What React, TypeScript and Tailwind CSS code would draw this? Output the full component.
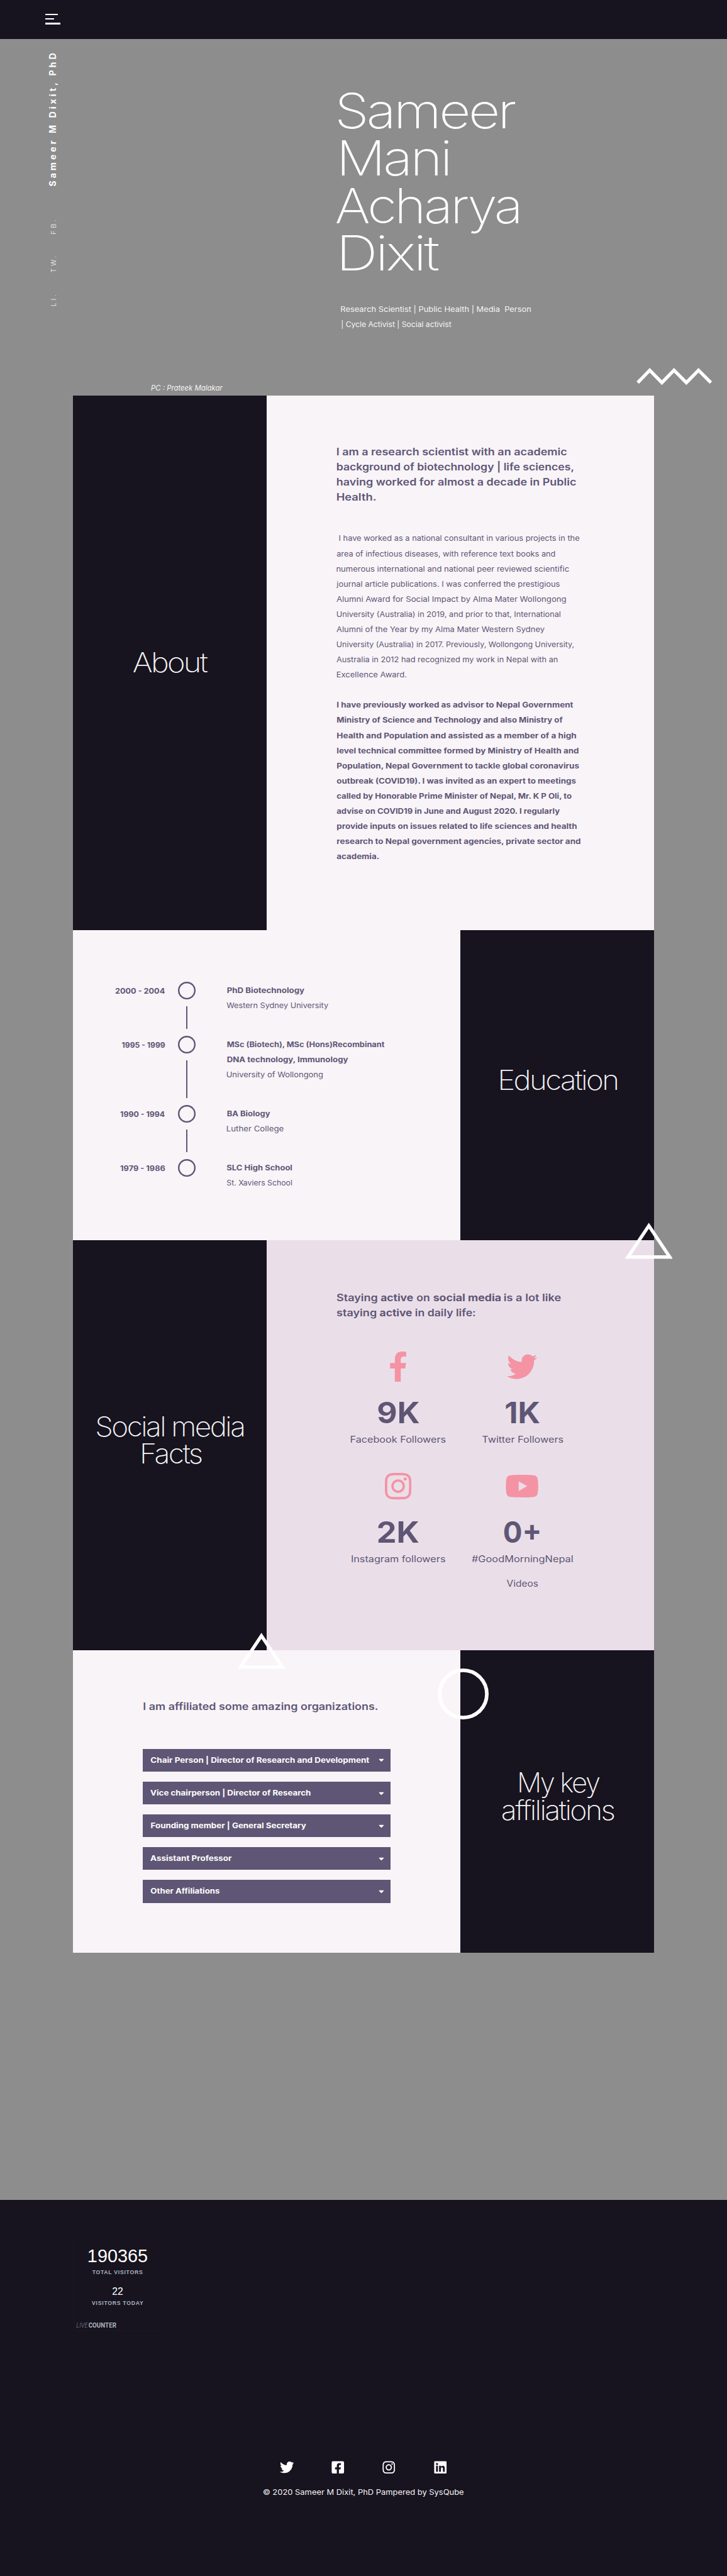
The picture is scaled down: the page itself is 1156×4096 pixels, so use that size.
import { useLayoutEffect, useRef, useState } from "react";
import type { ReactNode } from "react";
import {
  FaCaretDown,
  FaFacebookF,
  FaFacebookSquare,
  FaInstagram,
  FaLinkedin,
  FaTwitter,
  FaYoutube,
} from "react-icons/fa";

/** One run of text whose glyphs are stretched to span [from, to] inside its row. */
function Ink({ from, to, className = "", children }: { from: number; to: number; className?: string; children: string }) {
  const ref = useRef<HTMLSpanElement>(null);
  const [transform, setTransform] = useState("none");
  useLayoutEffect(() => {
    const ctx = document.createElement("canvas").getContext("2d");
    if (!ref.current || !ctx) return;
    const cs = getComputedStyle(ref.current);
    ctx.font = `${cs.fontStyle} ${cs.fontWeight} ${cs.fontSize} ${cs.fontFamily}`;
    ctx.letterSpacing = cs.letterSpacing === "normal" ? "0px" : cs.letterSpacing;
    const m = ctx.measureText(children);
    const left = -m.actualBoundingBoxLeft;
    const right = m.actualBoundingBoxRight;
    const scale = (to - from) / (right - left);
    setTransform(`translateX(${from - left * scale}px) scaleX(${scale})`);
  }, [from, to, children]);
  return (
    <span
      ref={ref}
      className={`col-start-1 row-start-1 justify-self-start origin-left whitespace-pre ${className}`}
      style={{ transform }}
    >
      {children}
    </span>
  );
}

function Row({ className = "", children }: { className?: string; children: ReactNode }) {
  return <div className={`grid grid-cols-1 items-baseline ${className}`}>{children}</div>;
}

type Span = [string, number, number];

function Lines({ items, className = "" }: { items: Span[]; className?: string }) {
  return (
    <div className={className}>
      {items.map(([text, from, to]) => (
        <Row key={text}>
          <Ink from={from} to={to}>{text}</Ink>
        </Row>
      ))}
    </div>
  );
}

function TitlePanel({ items, className = "pb-5" }: { items: Span[]; className?: string }) {
  return (
    <div className={`flex w-1/3 flex-col justify-center bg-[#17131f] ${className}`}>
      <Lines items={items} className="text-[54px] leading-[54px] font-extralight tracking-[-3px] text-[#f5f5f5]" />
    </div>
  );
}

const aboutLead: Span[] = [
  ["I am a research scientist with an academic", 0.8, 456.3],
  ["background of biotechnology | life sciences,", 0.8, 469.4],
  ["having worked for almost a decade in Public", 0.8, 474.6],
  ["Health.", 0.8, 77.7],
];

const aboutText: Span[] = [
  ["I have worked as a national consultant in various projects in the", 5.5, 481.4],
  ["area of infectious diseases, with reference text books and", 0.2, 433.3],
  ["numerous international and national peer reviewed scientific", 0.4, 461],
  ["journal article publications. I was conferred the prestigious", -0.7, 442.2],
  ["Alumni Award for Social Impact by Alma Mater Wollongong", 0, 454.8],
  ["University (Australia) in 2019, and prior to that, International", 0.8, 444.3],
  ["Alumni of the Year by my Alma Mater Western Sydney", 0, 412.4],
  ["University (Australia) in 2017. Previously, Wollongong University,", 0.8, 470],
  ["Australia in 2012 had recognized my work in Nepal with an", 0, 438.6],
  ["Excellence Award.", 0.8, 139.4],
];

const aboutStrong: Span[] = [
  ["I have previously worked as advisor to Nepal Government", 0.4, 470],
  ["Ministry of Science and Technology and also Ministry of", 0.4, 448.5],
  ["Health and Population and assisted as a member of a high", 0.4, 475.7],
  ["level technical committee formed by Ministry of Health and", 0.4, 480.4],
  ["Population, Nepal Government to tackle global coronavirus", 0.4, 481.4],
  ["outbreak (COVID19). I was invited as an expert to meetings", 0.3, 475.2],
  ["called by Honorable Prime Minister of Nepal, Mr. K P Oli, to", 0.3, 467.9],
  ["advise on COVID19 in June and August 2020. I regularly", 0.3, 443.3],
  ["provide inputs on issues related to life sciences and health", 0.4, 476.8],
  ["research to Nepal government agencies, private sector and", 0.4, 484.6],
  ["academia.", 0.3, 84],
];

const education: { years: Span; title: Span[]; school: Span; height: string }[] = [
  {
    years: ["2000 - 2004", 83.5, 182.5],
    title: [["PhD Biotechnology", 0.8, 155]],
    school: ["Western Sydney University", 0.3, 201.8],
    height: "h-[107px]",
  },
  {
    years: ["1995 - 1999", 96.5, 182.5],
    title: [
      ["MSc (Biotech), MSc (Hons)Recombinant", 0.8, 314.7],
      ["DNA technology, Immunology", 0.8, 242],
    ],
    school: ["University of Wollongong", 0.8, 190.9],
    height: "h-[137px]",
  },
  {
    years: ["1990 - 1994", 93.5, 182.5],
    title: [["BA Biology", 0.8, 87]],
    school: ["Luther College", 0.8, 113.3],
    height: "h-[107px]",
  },
  {
    years: ["1979 - 1986", 93.5, 182.5],
    title: [["SLC High School", 0.4, 129.7]],
    school: ["St. Xaviers School", 0.4, 130.2],
    height: "h-[62px]",
  },
];

const stats: { icon: ReactNode; count: Span; label: Span[] }[] = [
  {
    icon: <FaFacebookF className="size-[60px]" />,
    count: ["9K", 82.3, 164.5],
    label: [["Facebook Followers", 28, 216.7]],
  },
  {
    icon: <FaTwitter className="size-[60px]" />,
    count: ["1K", 89.7, 157.7],
    label: [["Twitter Followers", 42.6, 204.3]],
  },
  {
    icon: <FaInstagram className="size-[60px]" />,
    count: ["2K", 82.7, 163.7],
    label: [["Instagram followers", 29.7, 215.9]],
  },
  {
    icon: <FaYoutube className="h-[60px] w-[67.5px]" />,
    count: ["0+", 86.5, 157.2],
    label: [
      ["#GoodMorningNepal", 22.4, 222.5],
      ["Videos", 91.7, 154.1],
    ],
  },
];

const affiliations: Span[] = [
  ["Chair Person | Director of Research and Development", 15.4, 449.8],
  ["Vice chairperson | Director of Research", 15, 333.3],
  ["Founding member | General Secretary", 15.6, 324],
  ["Assistant Professor", 15, 176.6],
  ["Other Affiliations", 15.4, 152.5],
];

function Triangle({ className }: { className: string }) {
  return (
    <svg viewBox="0 0 94 72" className={`absolute h-[72px] w-[94px] ${className}`} fill="none">
      <path d="M47 6.3 L5.6 68.2 H88.4 Z" stroke="#fff" strokeWidth="6.6" strokeMiterlimit="10" />
    </svg>
  );
}

function Hero() {
  return (
    <section className="relative flex h-[706px] text-[#f4f4f4]">
      <div className="w-[145px] shrink-0 pt-[543px] pl-[90px]">
        <Row className="h-[30px] w-[520px] origin-top-left -rotate-90 leading-[30px]">
          <Ink from={251} to={515.4} className="text-[17.3px] font-bold tracking-[5px] text-white">Sameer M Dixit, PhD</Ink>
          <Ink from={157} to={185} className="text-[12px] font-light tracking-[4px]">FB.</Ink>
          <Ink from={80.5} to={113} className="text-[12px] font-light tracking-[4px]">TW.</Ink>
          <Ink from={14.4} to={37} className="text-[12px] font-light tracking-[4px]">LI.</Ink>
        </Row>
      </div>
      <div className="-mb-px flex w-[521px] shrink-0 flex-col justify-end text-[14.4px] leading-[30px] italic">
        <Row>
          <Ink from={154.4} to={296.7}>PC : Prateek Malakar</Ink>
        </Row>
      </div>
      <div className="flex-1 pt-24">
        <Lines
          className="text-[96.3px] leading-[94px] font-extralight tracking-[-4px] text-white"
          items={[
            ["Sameer", 3.2, 354.6],
            ["Mani", 11, 222.3],
            ["Acharya", -1, 361],
            ["Dixit", 11, 203.5],
          ]}
        />
        <Lines
          className="mt-[49px] text-[14.4px] leading-[30px]"
          items={[
            ["Research Scientist | Public Health | Media\u00a0 Person", 9, 385.5],
            ["| Cycle Activist | Social activist", 10, 228],
          ]}
        />
      </div>
      <svg viewBox="0 0 150 34" className="absolute top-[652px] left-[1261px] h-[34px] w-[150px]" fill="none">
        <path
          d="M2.5 29.2 L26.3 4.7 L50.4 29.2 L74.4 4.7 L98.9 29.2 L123 4.7 L147.5 29.2"
          stroke="#fff"
          strokeWidth="6.5"
          strokeMiterlimit="10"
        />
      </svg>
    </section>
  );
}

function Footer() {
  return (
    <footer className="h-[744.3px] bg-[#17131f] pt-[70px] text-white">
      <div className="ml-[146px] h-[188px] w-[175px] border border-[#181916] font-['Liberation_Sans',Arial,sans-serif]">
        <Row className="mt-[19px] text-[36px] leading-[42px]">
          <Ink from={28} to={145}>190365</Ink>
        </Row>
        <Row className="text-[12px] leading-[20px] font-bold tracking-[1px] text-[#aab4c3]">
          <Ink from={35.7} to={135.7}>TOTAL VISITORS</Ink>
        </Row>
        <Row className="mt-[15px] text-[20px] leading-[26px]">
          <Ink from={76} to={96.7}>22</Ink>
        </Row>
        <Row className="text-[12px] leading-[20px] font-bold tracking-[1px] text-[#aab4c3]">
          <Ink from={35} to={136.7}>VISITORS TODAY</Ink>
        </Row>
        <Row className="mt-[25px] font-['Roboto',sans-serif] text-[13.5px] leading-[20px]">
          <Ink from={4} to={27.7} className="font-light text-[#858d9a] italic">LIVE</Ink>
          <Ink from={28.3} to={83.7} className="font-bold text-[#a9b3bf]">COUNTER</Ink>
        </Row>
      </div>
      <div className="mt-[257.5px] flex justify-center gap-[73.5px] text-[28px]">
        <FaTwitter />
        <FaFacebookSquare />
        <FaInstagram />
        <FaLinkedin />
      </div>
      <Row className="mt-5 text-[14.8px] leading-[30px] font-normal text-[#f4f4f4]">
        <Ink from={521.7} to={918.3}>© 2020 Sameer M Dixit, PhD Pampered by SysQube</Ink>
      </Row>
    </footer>
  );
}

export default function App() {
  return (
    <div className="w-[1440px] overflow-hidden bg-[#8d8d8d] font-['Inter',sans-serif] [zoom:0.8027777]">
      <header className="flex h-[77px] flex-col gap-1.5 bg-[#17131f] pt-[27px] pl-[90px]">
        <span className="h-[3px] w-[25px] bg-white" />
        <span className="h-[3px] w-[17px] bg-white" />
        <span className="h-[3px] w-[30px] bg-white" />
      </header>
      <Hero />
      <main className="relative ml-[145px] w-[1150px] text-[#5f5675]">
        <section className="flex h-[1059px] bg-[#f8f4f8]">
          <TitlePanel items={[["About", 119, 267]]} className="pb-0" />
          <div className="w-2/3 pt-[98px] pl-[137.7px]">
            <Lines items={aboutLead} className="text-[19.3px] leading-[30px] font-semibold" />
            <Lines items={aboutText} className="mt-[51px] text-[14.4px] leading-[30px]" />
            <Lines items={aboutStrong} className="mt-[30px] text-[14.4px] leading-[30px] font-bold" />
          </div>
        </section>

        <section className="flex h-[615px] bg-[#f8f4f8]">
          <div className="w-2/3 pt-[103px] text-[14.4px] leading-[30px]">
            {education.map(({ years, title, school, height }, i) => (
              <div key={years[0]} className={`flex ${height}`}>
                <Row className="w-[185px] self-start pt-[3px] font-bold">
                  <Ink from={years[1]} to={years[2]}>{years[0]}</Ink>
                </Row>
                <div className="ml-[22px] flex w-[35px] flex-col items-center">
                  <svg viewBox="0 0 35 35" className="size-[35px] shrink-0" fill="none">
                    <circle cx="17.5" cy="17.5" r="16" stroke="#5f5675" strokeWidth="3" />
                  </svg>
                  {i < education.length - 1 && <span className="mt-[13px] mb-[14px] w-[2.5px] flex-1 bg-[#5f5675]" />}
                </div>
                <div className="ml-[61px] pt-[2px]">
                  <Lines items={title} className="font-bold" />
                  <Lines items={[school]} />
                </div>
              </div>
            ))}
          </div>
          <TitlePanel items={[["Education", 79.3, 310.3]]} />
        </section>

        <section className="flex h-[812px] bg-[#eadfe9]">
          <TitlePanel items={[["Social media", 47, 338.3], ["Facts", 137.3, 254.7]]} />
          <div className="w-2/3 pt-[99.5px] pl-[137.7px]">
            <div className="text-[19.3px] leading-[30px] font-semibold">
              <Row>
                <Ink from={0} to={80.7}>Staying</Ink>
                <Ink from={87.4} to={151.5} className="font-bold">active</Ink>
                <Ink from={158.6} to={184.3}>on</Ink>
                <Ink from={191.4} to={325} className="font-bold">social media</Ink>
                <Ink from={332.2} to={444.5}>is a lot like</Ink>
              </Row>
              <Row>
                <Ink from={0} to={78.7}>staying</Ink>
                <Ink from={85.4} to={149.5} className="font-bold">active</Ink>
                <Ink from={156.6} to={274.8}>in daily life:</Ink>
              </Row>
            </div>
            <div className="mt-[60px] grid w-[490.6px] grid-cols-2 gap-y-[38px]">
              {stats.map(({ icon, count, label }) => (
                <div key={label[0][0]}>
                  <div className="flex justify-center text-[#f493a4]">{icon}</div>
                  <Lines items={[count]} className="mt-[31px] text-[57.8px] leading-[60px] font-bold" />
                  <Lines items={label} className="text-[17.3px] leading-[48px]" />
                </div>
              ))}
            </div>
          </div>
        </section>

        <section className="flex h-[599px] bg-[#f8f4f8]">
          <div className="w-2/3 pt-[97px] pl-[138px]">
            <Row className="text-[19.3px] leading-[30px] font-semibold">
              <Ink from={1.6} to={465}>I am affiliated some amazing organizations.</Ink>
            </Row>
            <div className="mt-[68px] flex w-[491px] flex-col gap-5">
              {affiliations.map(([text, from, to]) => (
                <div key={text} className="flex h-[45px] items-center bg-[#5f5675] text-[14.4px] leading-[45px] font-bold text-white">
                  <Row className="w-[464px]">
                    <Ink from={from} to={to}>{text}</Ink>
                  </Row>
                  <FaCaretDown className="size-[16px]" />
                </div>
              ))}
            </div>
          </div>
          <TitlePanel items={[["My key", 117.2, 276.1], ["affiliations", 82.9, 304.3]]} />
        </section>

        <Triangle className="top-[1639px] left-[1093px]" />
        <Triangle className="top-[2451px] left-[326px]" />
        <svg viewBox="0 0 101 101" className="absolute top-[2522px] left-[722px] size-[101px]" fill="none">
          <circle cx="50.5" cy="50.5" r="46.8" stroke="#fff" strokeWidth="7.2" />
        </svg>
      </main>
      <div className="h-[490px]" />
      <Footer />
    </div>
  );
}
